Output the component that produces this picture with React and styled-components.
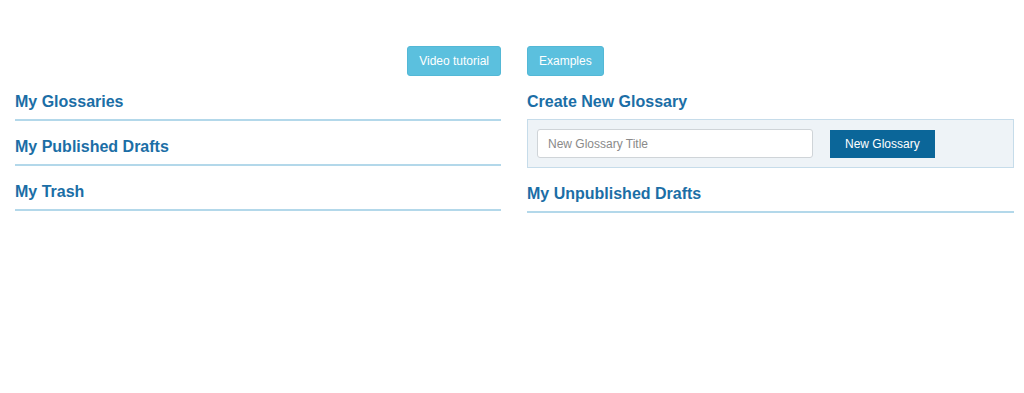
import React from "react";
import styled, { createGlobalStyle } from "styled-components";

const GlobalStyle = createGlobalStyle`
  html, body { margin: 0; padding: 0; background: #fff; }
  body { font-family: "Liberation Sans", Arial, sans-serif; font-size: 14px; color: #333; }
  * { box-sizing: border-box; }
`;

const Page = styled.div`
  display: grid;
  grid-template-columns: 486px 487px;
  column-gap: 26px;
  padding: 46px 10px 0 15px;
`;

const Column = styled.div`
  display: flex;
  flex-direction: column;
`;

const ButtonRow = styled.div`
  display: flex;
  justify-content: ${(p) => (p.$align === "right" ? "flex-end" : "flex-start")};
  height: 30px;
`;

const InfoButton = styled.button`
  font-family: inherit;
  font-size: 12px;
  line-height: 18px;
  padding: 5px 11px;
  color: #fff;
  background: #5bc0de;
  border: 1px solid #53b8d6;
  border-radius: 3px;
  cursor: pointer;
`;

const SectionTitle = styled.h3`
  margin: 15px 0 0;
  font-size: 16px;
  line-height: 20px;
  font-weight: bold;
  color: #1b6ea6;
  padding: 1px 0 7px;
  border-bottom: 2px solid ${(p) => (p.$plain ? "transparent" : "#b3d8ea")};
`;

const CreateBox = styled.div`
  display: flex;
  align-items: center;
  gap: 17px;
  margin-top: -2px;
  padding: 9px;
  background: #eef3f7;
  border: 1px solid #c6dcea;
`;

const TitleInput = styled.input`
  width: 276px;
  height: 29px;
  padding: 0 10px;
  font-family: inherit;
  font-size: 12px;
  color: #333;
  background: #fff;
  border: 1px solid #cfd4d8;
  border-radius: 3px;
  outline: none;
  &::placeholder { color: #8a8a8a; }
`;

const PrimaryButton = styled.button`
  height: 28px;
  padding: 0 15px;
  font-family: inherit;
  font-size: 12px;
  color: #fff;
  background: #0b6699;
  border: none;
  border-radius: 0;
  cursor: pointer;
`;

export default function App() {
  return (
    <>
      <GlobalStyle />
      <Page>
        <Column>
          <ButtonRow $align="right">
            <InfoButton>Video tutorial</InfoButton>
          </ButtonRow>
          <SectionTitle>My Glossaries</SectionTitle>
          <SectionTitle>My Published Drafts</SectionTitle>
          <SectionTitle>My Trash</SectionTitle>
        </Column>
        <Column>
          <ButtonRow>
            <InfoButton>Examples</InfoButton>
          </ButtonRow>
          <SectionTitle $plain>Create New Glossary</SectionTitle>
          <CreateBox>
            <TitleInput placeholder="New Glossary Title" />
            <PrimaryButton>New Glossary</PrimaryButton>
          </CreateBox>
          <SectionTitle>My Unpublished Drafts</SectionTitle>
        </Column>
      </Page>
    </>
  );
}
